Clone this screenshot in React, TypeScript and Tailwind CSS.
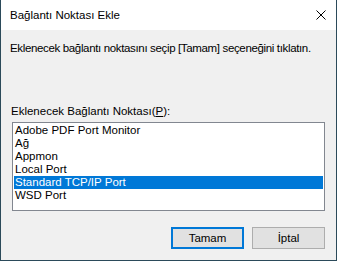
const ports = [
  'Adobe PDF Port Monitor',
  'Ağ',
  'Appmon',
  'Local Port',
  'Standard TCP/IP Port',
  'WSD Port'
]

const font = { fontFamily: '"Liberation Sans", Arial, sans-serif' }

export default function App() {
  const selected = 4
  return (
    <div
      className="w-[337px] h-[261px] flex flex-col bg-[#f0f0f0] border-x border-b border-[#2b4a5a] text-[11.5px] text-black"
      style={font}
    >
      {/* Title bar */}
      <div className="h-[30px] bg-white flex items-center justify-between pl-[9px] pr-[9px]">
        <span className="text-[11.5px] leading-[15px]">Bağlantı Noktası Ekle</span>
        <svg width="10" height="10" viewBox="0 0 10 10" className="mr-[1px]">
          <path d="M0.5 0.5 L9.5 9.5 M9.5 0.5 L0.5 9.5" stroke="#000" strokeWidth="1" fill="none" />
        </svg>
      </div>

      <div className="flex flex-col px-[11px]">
        <p className="mt-[11px] -ml-[2px] leading-[15px] whitespace-nowrap tracking-[-0.35px]">
          Eklenecek bağlantı noktasını seçip [Tamam] seçeneğini tıklatın.
        </p>

        <p className="mt-[48px] -ml-[1px] leading-[15px] whitespace-nowrap">
          Eklenecek Bağlantı Noktası(<span className="underline">P</span>):
        </p>

        {/* Port list */}
        <div className="mt-[3px] h-[89px] bg-white border border-[#828790] p-[1px]">
          {ports.map((p, i) => (
            <div
              key={p}
              className={
                'h-[13px] leading-[13px] pl-[1px] whitespace-nowrap ' +
                (i === selected ? 'bg-[#0078d7] text-white' : '')
              }
            >
              {p}
            </div>
          ))}
        </div>

        {/* Buttons */}
        <div className="mt-[16px] flex justify-end gap-[8px]">
          <button className="w-[73px] h-[22px] bg-[#e1e1e1] border-2 border-[#0078d7] leading-[18px]">
            Tamam
          </button>
          <button className="w-[73px] h-[22px] bg-[#e1e1e1] border border-[#adadad] leading-[20px]">
            İptal
          </button>
        </div>
      </div>
    </div>
  )
}
